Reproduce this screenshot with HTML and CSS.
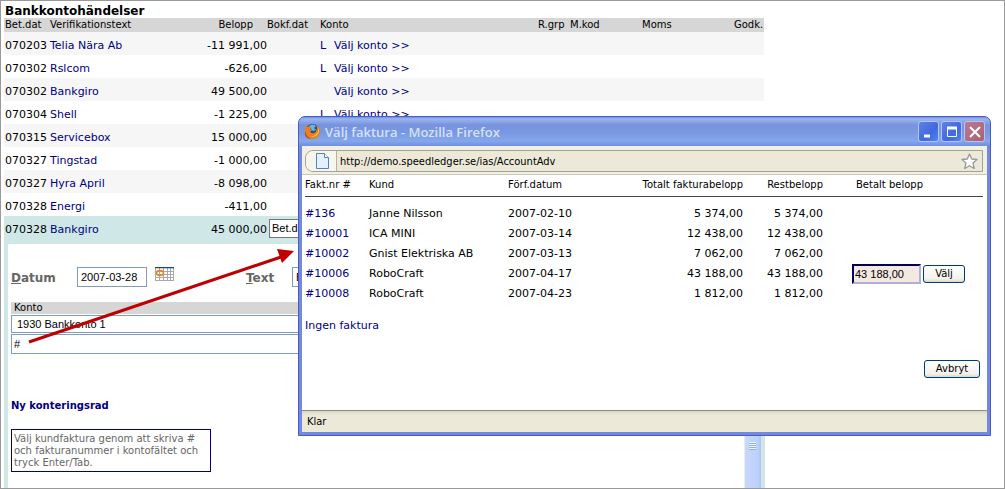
FILE: index.html
```html
<!DOCTYPE html>
<html lang="sv">
<head>
<meta charset="utf-8">
<title>Bankkontohändelser</title>
<link rel="stylesheet" href="styles.css">
</head>
<body>
<main class="page">
  <div class="sheet">
    <h1 class="heading">Bankkontohändelser</h1>
    <table class="events">
      <colgroup><col class="c-date"><col class="c-text"><col class="c-amount"><col class="c-booked"><col class="c-flag"><col class="c-account"><col class="c-rgrp"><col class="c-mkod"><col class="c-moms"><col class="c-godk"></colgroup>
      <thead>
        <tr><th>Bet.dat</th><th>Verifikationstext</th><th class="amount-head">Belopp</th><th>Bokf.dat</th><th colspan="2">Konto</th><th>R.grp</th><th>M.kod</th><th>Moms</th><th>Godk.</th></tr>
      </thead>
      <tbody>
        <tr><td>070203</td><td><a href="#">Telia Nära Ab</a></td><td class="num">-11 991,00</td><td></td><td><a href="#">L</a></td><td><a href="#">Välj konto &gt;&gt;</a></td><td colspan="4"></td></tr>
        <tr><td>070302</td><td><a href="#">Rslcom</a></td><td class="num">-626,00</td><td></td><td><a href="#">L</a></td><td><a href="#">Välj konto &gt;&gt;</a></td><td colspan="4"></td></tr>
        <tr><td>070302</td><td><a href="#">Bankgiro</a></td><td class="num">49 500,00</td><td></td><td></td><td><a href="#">Välj konto &gt;&gt;</a></td><td colspan="4"></td></tr>
        <tr><td>070304</td><td><a href="#">Shell</a></td><td class="num">-1 225,00</td><td></td><td><a href="#">L</a></td><td><a href="#">Välj konto &gt;&gt;</a></td><td colspan="4"></td></tr>
        <tr><td>070315</td><td><a href="#">Servicebox</a></td><td class="num">15 000,00</td><td colspan="7"></td></tr>
        <tr><td>070327</td><td><a href="#">Tingstad</a></td><td class="num">-1 000,00</td><td colspan="7"></td></tr>
        <tr><td>070327</td><td><a href="#">Hyra April</a></td><td class="num">-8 098,00</td><td colspan="7"></td></tr>
        <tr><td>070328</td><td><a href="#">Energi</a></td><td class="num">-411,00</td><td colspan="7"></td></tr>
        <tr class="selected"><td>070328</td><td><a href="#">Bankgiro</a></td><td class="num">45 000,00</td><td colspan="7" class="booked"><input class="booked-input" type="text" value="Bet.dat" aria-label="Bokf.dat"></td></tr>
      </tbody>
    </table>

    <div class="detail">
      <div class="form">
        <div class="fields">
          <label class="label" for="date"><u>D</u>atum</label>
          <input class="input date" id="date" type="text" value="2007-03-28">
          <button class="calendar" type="button" aria-label="Kalender">
            <svg width="20" height="15" viewBox="0 0 20 15">
              <rect width="19" height="14" fill="#fff"/>
              <path d="M0.500 1V14M4.500 1V14M8.500 1V14M12.500 1V14M15.500 1V14M18.500 1V14M0 4.500H19M0 7.500H19M0 10.500H19M0 13.500H19" stroke="#aaa" fill="none"/>
              <path d="M0 0.500H19" stroke="#1c3f94" stroke-width="1.500"/>
              <ellipse cx="5" cy="6" rx="3.500" ry="2.500" fill="none" stroke="#f08020" stroke-width="1.500"/>
            </svg>
          </button>
          <label class="label text-label" for="text"><u>T</u>ext</label>
          <input class="input text" id="text" type="text" value="Bankgiro">
        </div>
        <div class="accounts">
          <div class="accounts-head">Konto</div>
          <input class="input account first" type="text" value="1930 Bankkonto 1" aria-label="Konto rad 1">
          <input class="input account" type="text" value="#" aria-label="Konto rad 2">
        </div>
        <a class="new-row" href="#">Ny konteringsrad</a>
        <p class="note">Välj kundfaktura genom att skriva #<br>och fakturanummer i kontofältet och<br>tryck Enter/Tab.</p>
      </div>
      <div class="scrollbar"><span class="grip"></span></div>
    </div>
  </div>

  <svg class="arrow" width="300" height="110" viewBox="0 0 300 110" aria-hidden="true">
    <path d="M29 102L284 16" stroke="#c00000" stroke-width="3"/>
    <path d="M277 9L294 11L282 23Z" fill="#c00000"/>
  </svg>

  <section class="window" aria-label="Välj faktura">
    <header class="titlebar">
      <svg width="17" height="17" viewBox="0 0 17 17">
        <circle cx="8.500" cy="8" r="7" fill="#23508e"/>
        <path d="M5 3Q9 0 12 3L10 5L12 7L9 8L7 6Z" fill="#69b6df"/>
        <path d="M2 2L3 4Q5 3 7 4L6 6L8 7Q7 9 6 8Q7 11 10 10Q13 9 12 6Q13 7 13 8Q14 5 12 2Q17 5 16 10Q14 16 8 16Q1 15 1 8Q1 4 2 2Z" fill="#ee7d1c"/>
        <path d="M13 3Q17 8 13 12Q10 15 6 13Q11 14 14 9Q15 6 13 3Z" fill="#ffd34c"/>
        <path d="M1 8Q2 14 7 16Q3 16 1 12Z" fill="#bd3811"/>
      </svg>
      <h2 class="title">Välj faktura - Mozilla Firefox</h2>
      <div class="controls">
        <button class="control" type="button" aria-label="Minimera"><svg width="18" height="18" viewBox="0 0 18 18"><path d="M4 13H10" stroke="#fff" stroke-width="3"/></svg></button>
        <button class="control" type="button" aria-label="Maximera"><svg width="18" height="18" viewBox="0 0 18 18"><path d="M4.500 5V13.500H13.500V5" stroke="#fff" fill="none"/><path d="M4 5H14" stroke="#fff" stroke-width="3"/></svg></button>
        <button class="control close" type="button" aria-label="Stäng"><svg width="18" height="18" viewBox="0 0 18 18"><path d="M4 4L14 14M14 4L4 14" stroke="#fff" stroke-width="2"/></svg></button>
      </div>
    </header>
    <div class="addressbar">
      <div class="address">
        <span class="page-icon"><svg width="13" height="16" viewBox="0 0 13 16"><path d="M0.500 0.500H8.500L12.500 4.500V15.500H0.500Z" fill="#e4f0fd" stroke="#5580bd"/><path d="M8.500 0.500V4.500H12.500" fill="#fff" stroke="#5580bd"/></svg></span>
        <input class="url" type="text" value="http://demo.speedledger.se/ias/AccountAdv" aria-label="Adress">
        <svg class="star" width="17" height="17" viewBox="0 0 17 17"><path d="M8.500 1L10.700 6L16 6.500L12 10L13.200 15.500L8.500 12.700L3.800 15.500L5 10L1 6.500L6.300 6Z" fill="#fff" stroke="#999" stroke-width="1.300" stroke-linejoin="round"/></svg>
      </div>
    </div>
    <div class="content">
      <table class="invoices">
        <colgroup><col class="i-no"><col class="i-customer"><col class="i-date"><col class="i-total"><col class="i-rest"><col></colgroup>
        <thead><tr><th>Fakt.nr #</th><th>Kund</th><th>Förf.datum</th><th class="num">Totalt fakturabelopp</th><th class="num">Restbelopp</th><th class="paid-head">Betalt belopp</th></tr></thead>
        <tbody>
          <tr><td><a href="#">#136</a></td><td>Janne Nilsson</td><td>2007-02-10</td><td class="num">5 374,00</td><td class="num">5 374,00</td><td></td></tr>
          <tr><td><a href="#">#10001</a></td><td>ICA MINI</td><td>2007-03-14</td><td class="num">12 438,00</td><td class="num">12 438,00</td><td></td></tr>
          <tr><td><a href="#">#10002</a></td><td>Gnist Elektriska AB</td><td>2007-03-13</td><td class="num">7 062,00</td><td class="num">7 062,00</td><td></td></tr>
          <tr><td><a href="#">#10006</a></td><td>RoboCraft</td><td>2007-04-17</td><td class="num">43 188,00</td><td class="num">43 188,00</td><td><div class="pay"><input class="paid" type="text" value="43 188,00" aria-label="Betalt belopp"><button class="button" type="button">Välj</button></div></td></tr>
          <tr><td><a href="#">#10008</a></td><td>RoboCraft</td><td>2007-04-23</td><td class="num">1 812,00</td><td class="num">1 812,00</td><td></td></tr>
        </tbody>
      </table>
      <a class="none" href="#">Ingen faktura</a>
      <div class="actions"><button class="button cancel" type="button">Avbryt</button></div>
    </div>
    <footer class="status">Klar</footer>
  </section>
</main>
</body>
</html>
```
FILE: styles.css
```css
* { box-sizing: border-box; }

body {
  margin: 0;
  background: #fff;
  color: #000;
  font: 11px/14px "DejaVu Sans", Verdana, sans-serif;
}

a { color: #000080; text-decoration: none; }
button, input { margin: 0; font-family: inherit; }
table { border-collapse: collapse; table-layout: fixed; width: 100%; }
th, td { padding: 0; text-align: left; font-weight: normal; white-space: nowrap; }
.num { text-align: right; }

.page {
  position: relative;
  display: flex;
  min-height: 100vh;
  overflow: hidden;
  border: 1px solid #999;
  padding: 3px;
}

.sheet { display: flex; flex-direction: column; width: 100%; max-width: 761px; }
.heading { margin: 0; padding-left: 1px; font-size: 12px; line-height: 14px; }

/* Bank events */
.events { width: calc(100% - 1px); }
.events th { height: 14px; background: #d6d6d6; font-size: 10px; line-height: 14px; }
.events td { height: 23px; padding-top: 4px; }
.events th:first-child, .events td:first-child { padding-left: 1px; }
.events tbody tr:nth-child(odd) { background: #f6f6f6; }
.events tbody tr.selected { background: #cfe8e7; }
.events .amount-head { padding-right: 14px; text-align: right; }
.events td.booked { padding: 1px 0 0 2px; }
.c-date { width: 46px; }
.c-text { width: 120px; }
.c-amount { width: 97px; }
.c-booked { width: 53px; }
.c-flag { width: 14px; }
.c-rgrp { width: 32px; }
.c-mkod { width: 72px; }
.c-moms { width: 92px; }
.c-godk { width: 30px; }

.booked-input {
  display: block;
  width: 80px;
  height: 19px;
  border: 1px solid #777;
  padding: 0 2px;
  font: 11px "Liberation Sans", Arial, sans-serif;
}

/* Posting details */
.detail {
  display: flex;
  flex: 1;
  margin-bottom: -3px;
  border: solid #cfe8e7;
  border-width: 5px 4px 0;
}
.form { flex: 1; padding: 23px 0 16px 3px; }
.fields { display: flex; align-items: flex-start; height: 35px; }
.label { width: 66px; color: #666; font-size: 12px; font-weight: bold; line-height: 22px; }
.text-label { width: 46px; margin-left: 71px; }
.input {
  height: 20px;
  border: 1px solid #7f9db9;
  padding: 0 3px;
  background: #fff;
  font: 11px "Liberation Sans", Arial, sans-serif;
}
.date { width: 70px; }
.text { flex: 1; }
.calendar { margin-left: 8px; border: 0; padding: 0; background: none; line-height: 0; }
.accounts { display: flex; flex-direction: column; gap: 1px; }
.accounts-head { padding-left: 3px; background: #d6d6d6; font-size: 10px; line-height: 12px; }
.account { width: 100%; padding-left: 2px; }
.account.first { height: 18px; padding-left: 5px; }
.new-row { display: block; margin-top: 45px; font-size: 10px; font-weight: bold; }
.note {
  width: 200px;
  margin: 16px 0 0;
  border: 1px solid #000080;
  padding: 3px 2px 2px;
  color: #666;
  font-size: 10px;
  line-height: 12px;
  white-space: nowrap;
}
.scrollbar {
  width: 17px;
  border: solid #ececec;
  border-width: 0 2px 0 1px;
  border-right-color: #b4c8f0;
  background: linear-gradient(90deg, #c8d8fc, #bad0fc);
}
.grip {
  display: block;
  width: 7px;
  height: 8px;
  margin: 198px auto 0;
  background: repeating-linear-gradient(#f0f6ff 0 1px, #8cb0f8 1px 2px);
}

.arrow { position: absolute; left: -1px; top: 239px; }

/* Invoice window */
.window {
  position: absolute;
  top: 115px;
  left: 297px;
  right: 13px;
  border: 1px solid #4a5cc4;
  border-radius: 7px 7px 0 0;
  padding: 0 3px 3px;
  background: #7388e0;
}
.titlebar {
  display: flex;
  align-items: center;
  height: 29px;
  margin: 0 -3px;
  border-radius: 6px 6px 0 0;
  padding: 0 5px;
  background: linear-gradient(#6d90e4 0, #9ab5ee 2px, #7893de 8px, #7a98e2 16px, #84a8ec 24px, #6f8ddd 29px);
}
.title {
  flex: 1;
  margin: 0 0 0 4px;
  color: #d5e1fa;
  font: 600 13px/18px "Open Sans", "Trebuchet MS", sans-serif;
}
.controls { display: flex; gap: 2px; }
.control {
  width: 21px;
  height: 21px;
  border: 1px solid #b5c4f2;
  border-radius: 3px;
  padding: 0;
  background: linear-gradient(135deg, #6080e4, #3f69df 60%, #4f86ee);
  line-height: 0;
}
.close { background: linear-gradient(135deg, #b77b94, #ad5f72); }

.addressbar {
  height: 29px;
  border-bottom: 1px solid #c9c6b4;
  padding: 4px 4px 2px 3px;
  background: #f2f0e4;
}
.address {
  display: flex;
  align-items: center;
  height: 22px;
  border: 1px solid #a5a292;
  border-radius: 8px 0 0 8px;
  padding-right: 4px;
  background: #ece9d8;
}
.page-icon {
  display: flex;
  align-self: stretch;
  align-items: center;
  width: 31px;
  border-right: 1px solid #b6b3a4;
  border-radius: 7px 0 0 7px;
  padding-left: 10px;
  background: #f6f5ee;
}
.url {
  flex: 1;
  height: 18px;
  border: 0;
  padding: 0 3px;
  background: transparent;
  font: 11px "DejaVu Sans Condensed", Tahoma, sans-serif;
}

.content { padding: 0 4px 32px 3px; background: #fff; }
.invoices { border-collapse: separate; border-spacing: 0; }
.invoices th { height: 22px; border-bottom: 1px solid #444; padding-bottom: 2px; font-size: 10px; line-height: 12px; }
.invoices td { height: 20px; }
.invoices tbody tr:first-child td { height: 27px; padding-top: 7px; }
.invoices .paid-head { padding-left: 33px; }
.i-no { width: 64px; }
.i-customer { width: 139px; }
.i-date { width: 105px; }
.i-total { width: 130px; }
.i-rest { width: 80px; }
.pay { display: flex; align-items: center; gap: 2px; height: 20px; padding-left: 29px; }
.paid {
  width: 69px;
  height: 20px;
  border: 2px solid #000050;
  border-right-color: #b0b0dc;
  border-bottom-color: #b0b0dc;
  padding: 0 1px;
  background: #f3e9e1;
  font: 11px "Liberation Sans", Arial, sans-serif;
}
.button {
  width: 42px;
  height: 18px;
  border: 1px solid #003c74;
  border-radius: 3px;
  padding: 0;
  background: linear-gradient(#fff, #f2f1ea 80%, #dcd8ca);
  font-size: 10px;
  line-height: 12px;
}
.none { display: block; margin-top: 15px; }
.actions { display: flex; justify-content: flex-end; margin-top: 27px; padding-right: 3px; }
.cancel { width: 56px; }
.status {
  border-top: 1px solid #8f8d80;
  padding: 4px 5px 3px;
  background: linear-gradient(#dad6c4, #ece9d8 4px);
  font: 11px/14px "DejaVu Sans Condensed", Tahoma, sans-serif;
}
```
